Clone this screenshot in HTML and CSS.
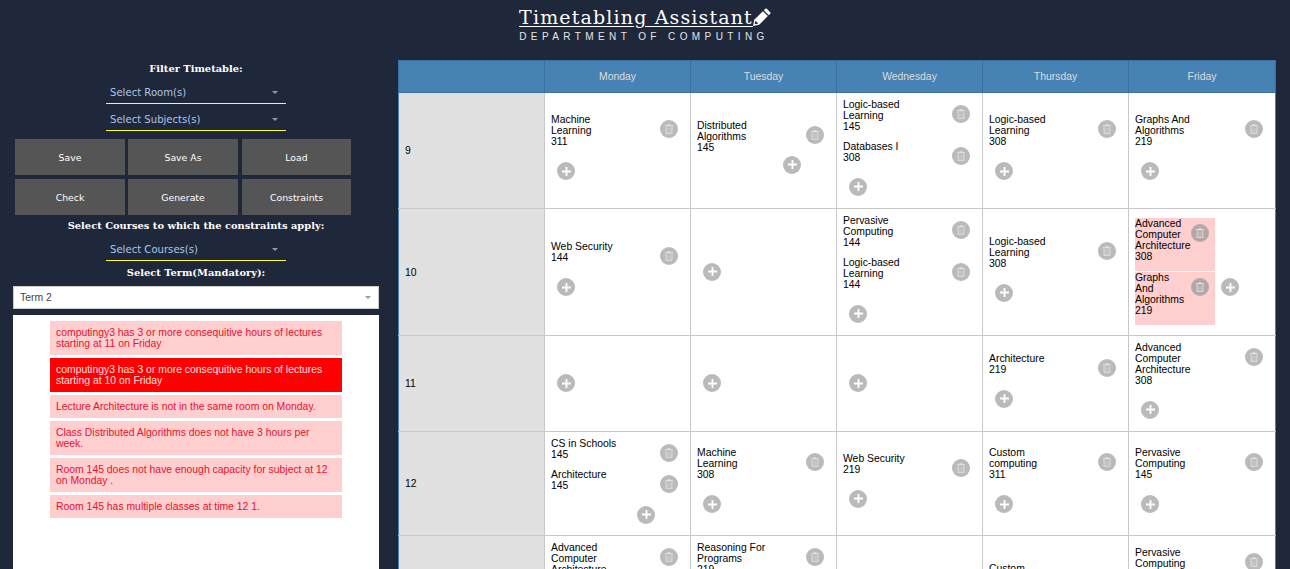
FILE: index.html
```html
<!DOCTYPE html>
<html lang="en">
<head>
<meta charset="utf-8">
<title>Timetabling Assistant</title>
<link rel="stylesheet" href="styles.css">
</head>
<body>
<svg class="sprite" width="0" height="0" aria-hidden="true">
  <symbol id="trash" viewBox="0 0 12 14"><path fill="currentColor" fill-rule="evenodd" d="M4 0h4v1.500h4v1.300H0V1.500h4zM1 3.500h10V14H1zM2.300 3.500v9.200h7.400V3.500z"/><path fill="currentColor" opacity=".55" d="M4 5h1.200v6.500H4zM6.800 5H8v6.500H6.800z"/></symbol>
  <symbol id="plus" viewBox="0 0 10 10"><path fill="currentColor" d="M4 0h2v4h4v2H6v4H4V6H0V4h4z"/></symbol>
</svg>
<header class="masthead">
  <h1 class="title"><span class="title-text">Timetabling Assistant</span><svg class="pencil" viewBox="0 0 16 16" aria-hidden="true"><path fill="currentColor" d="M12.300.7l3 3a1 1 0 0 1 0 1.400L14 6.400 9.600 2 10.900.7a1 1 0 0 1 1.400 0zM8.800 2.800l4.400 4.400-7.700 7.700L0 16l1.100-5.500zM2.200 11.300l-.7 3.200 3.200-.7z"/></svg></h1>
  <p class="subtitle">DEPARTMENT OF COMPUTING</p>
</header>
<main class="layout">
  <aside class="sidebar">
    <div class="label label-filter">Filter Timetable:</div>
    <div class="select select-room"><span>Select Room(s)</span><i class="caret"></i></div>
    <div class="select select-subject"><span>Select Subjects(s)</span><i class="caret"></i></div>
    <div class="buttons">
      <button class="btn">Save</button><button class="btn">Save As</button><button class="btn btn-narrow">Load</button>
      <button class="btn">Check</button><button class="btn">Generate</button><button class="btn btn-narrow">Constraints</button>
    </div>
    <div class="label label-courses">Select Courses to which the constraints apply:</div>
    <div class="select select-courses"><span>Select Courses(s)</span><i class="caret"></i></div>
    <div class="label label-term">Select Term(Mandatory):</div>
    <div class="term"><span>Term 2</span><i class="caret"></i></div>
    <div class="messages">
      <div class="msg">computingy3 has 3 or more consequitive hours of lectures starting at 11 on Friday</div>
      <div class="msg msg-active">computingy3 has 3 or more consequitive hours of lectures starting at 10 on Friday</div>
      <div class="msg">Lecture Architecture is not in the same room on Monday.</div>
      <div class="msg">Class Distributed Algorithms does not have 3 hours per week.</div>
      <div class="msg">Room 145 does not have enough capacity for subject at 12 on Monday .</div>
      <div class="msg">Room 145 has multiple classes at time 12 1.</div>
    </div>
  </aside>
  <table class="timetable">
    <thead>
      <tr><th></th><th>Monday</th><th>Tuesday</th><th>Wednesday</th><th>Thursday</th><th>Friday</th></tr>
    </thead>
    <tbody>
      <tr class="r9">
        <td class="hour">9</td>
        <td><div class="entry"><span>Machine<br>Learning<br>311</span><button class="del"><svg><use href="#trash"/></svg></button></div><button class="add"><svg><use href="#plus"/></svg></button></td>
        <td><div class="entry"><span>Distributed<br>Algorithms<br>145</span><button class="del"><svg><use href="#trash"/></svg></button></div><button class="add add-tight"><svg><use href="#plus"/></svg></button></td>
        <td><div class="entry"><span>Logic-based<br>Learning<br>145</span><button class="del"><svg><use href="#trash"/></svg></button></div><div class="entry"><span>Databases I<br>308</span><button class="del"><svg><use href="#trash"/></svg></button></div><button class="add"><svg><use href="#plus"/></svg></button></td>
        <td><div class="entry"><span>Logic-based<br>Learning<br>308</span><button class="del"><svg><use href="#trash"/></svg></button></div><button class="add"><svg><use href="#plus"/></svg></button></td>
        <td><div class="entry"><span>Graphs And<br>Algorithms<br>219</span><button class="del"><svg><use href="#trash"/></svg></button></div><button class="add"><svg><use href="#plus"/></svg></button></td>
      </tr>
      <tr class="r10">
        <td class="hour">10</td>
        <td><div class="entry"><span>Web Security<br>144</span><button class="del"><svg><use href="#trash"/></svg></button></div><button class="add"><svg><use href="#plus"/></svg></button></td>
        <td><button class="add"><svg><use href="#plus"/></svg></button></td>
        <td><div class="entry"><span>Pervasive<br>Computing<br>144</span><button class="del"><svg><use href="#trash"/></svg></button></div><div class="entry"><span>Logic-based<br>Learning<br>144</span><button class="del"><svg><use href="#trash"/></svg></button></div><button class="add"><svg><use href="#plus"/></svg></button></td>
        <td><div class="entry"><span>Logic-based<br>Learning<br>308</span><button class="del"><svg><use href="#trash"/></svg></button></div><button class="add"><svg><use href="#plus"/></svg></button></td>
        <td>
          <div class="conflicts">
            <div class="conflict-stack">
              <div class="entry entry-conflict"><span>Advanced<br>Computer<br>Architecture<br>308</span><button class="del"><svg><use href="#trash"/></svg></button></div>
              <div class="entry entry-conflict"><span>Graphs<br>And<br>Algorithms<br>219</span><button class="del"><svg><use href="#trash"/></svg></button></div>
            </div>
            <button class="add add-beside"><svg><use href="#plus"/></svg></button>
          </div>
        </td>
      </tr>
      <tr class="r11">
        <td class="hour">11</td>
        <td><button class="add"><svg><use href="#plus"/></svg></button></td>
        <td><button class="add"><svg><use href="#plus"/></svg></button></td>
        <td><button class="add"><svg><use href="#plus"/></svg></button></td>
        <td><div class="entry"><span>Architecture<br>219</span><button class="del"><svg><use href="#trash"/></svg></button></div><button class="add"><svg><use href="#plus"/></svg></button></td>
        <td><div class="entry"><span>Advanced<br>Computer<br>Architecture<br>308</span><button class="del"><svg><use href="#trash"/></svg></button></div><button class="add"><svg><use href="#plus"/></svg></button></td>
      </tr>
      <tr class="r12">
        <td class="hour">12</td>
        <td><div class="entry"><span>CS in Schools<br>145</span><button class="del"><svg><use href="#trash"/></svg></button></div><div class="entry"><span>Architecture<br>145</span><button class="del"><svg><use href="#trash"/></svg></button></div><button class="add add-right"><svg><use href="#plus"/></svg></button></td>
        <td><div class="entry"><span>Machine<br>Learning<br>308</span><button class="del"><svg><use href="#trash"/></svg></button></div><button class="add"><svg><use href="#plus"/></svg></button></td>
        <td><div class="entry"><span>Web Security<br>219</span><button class="del"><svg><use href="#trash"/></svg></button></div><button class="add"><svg><use href="#plus"/></svg></button></td>
        <td><div class="entry"><span>Custom<br>computing<br>311</span><button class="del"><svg><use href="#trash"/></svg></button></div><button class="add"><svg><use href="#plus"/></svg></button></td>
        <td><div class="entry"><span>Pervasive<br>Computing<br>145</span><button class="del"><svg><use href="#trash"/></svg></button></div><button class="add"><svg><use href="#plus"/></svg></button></td>
      </tr>
      <tr class="r13">
        <td class="hour">13</td>
        <td><div class="entry"><span>Advanced<br>Computer<br>Architecture<br>308</span><button class="del"><svg><use href="#trash"/></svg></button></div></td>
        <td><div class="entry"><span>Reasoning For<br>Programs<br>219</span><button class="del"><svg><use href="#trash"/></svg></button></div></td>
        <td></td>
        <td class="cell-lowest"><div class="entry"><span>Custom<br>computing<br>311</span><button class="del"><svg><use href="#trash"/></svg></button></div></td>
        <td class="cell-low"><div class="entry"><span>Pervasive<br>Computing<br>145</span><button class="del"><svg><use href="#trash"/></svg></button></div></td>
      </tr>
    </tbody>
  </table>
</main>
</body>
</html>
```
FILE: styles.css
```css
* { box-sizing: border-box; }
html, body { margin: 0; height: 569px; overflow: hidden; }
body { background: #1f273b; font-family: "Liberation Sans", Arial, sans-serif; color: #000; }
.sprite { position: absolute; }
button { font: inherit; padding: 0; border: 0; cursor: pointer; }

.masthead { height: 60px; padding-top: 6px; text-align: center; color: #fff; }
.title { margin: 0; display: flex; justify-content: center; align-items: flex-start; font: 400 19px/22px "DejaVu Serif", serif; letter-spacing: 1.150px; }
.title-text { text-decoration: underline; text-underline-offset: 2px; }
.pencil { width: 18px; height: 18px; margin: 2px 0 0 0; }
.subtitle { margin: 3px 0 0; padding-right: 2px; font-size: 10px; line-height: 12px; letter-spacing: 4.400px; color: #e6e6e6; }

.layout { display: flex; align-items: flex-start; padding-left: 13px; }
.sidebar { width: 366px; margin-right: 19px; flex: none; }
.label { text-align: center; color: #fff; font: 700 9.900px/12px "DejaVu Serif", serif; }
.label-filter { margin-top: 3px; }
.select { width: 180px; margin: 0 auto; padding: 0 4px 2px; display: flex; align-items: flex-end; justify-content: space-between; border-bottom: 1px solid #ffff33; color: #a9c7e8; font: 10.100px/16px "DejaVu Sans", sans-serif; }
.select-room { height: 29px; }
.select-subject { height: 27px; }
.select-courses { height: 29px; }
.select .caret { margin: 0 4px 7px 0; }
.caret { width: 0; height: 0; border-style: solid; border-color: #999 transparent transparent; border-width: 3px 3px 0; }
.buttons { margin: 8px 0 0 2px; display: grid; grid-template-columns: 113px 114px 109px; row-gap: 4px; }
.btn { width: 110px; height: 36px; padding-top: 1px; background: #555; color: #fff; font: 9.300px/12px "DejaVu Sans", sans-serif; }
.btn-narrow { width: 109px; }
.label-courses { margin-top: 5px; }
.label-term { margin-top: 6px; }
.term { height: 23px; margin-top: 7px; padding: 0 7px 0 6px; display: flex; align-items: center; justify-content: space-between; background: #fff; border: 1px solid #ccc; color: #444; font-size: 10.400px; }
.messages { height: 300px; margin-top: 6px; padding: 6px 37px 0; background: #fff; }
.msg { margin-bottom: 3px; padding: 6px; background: #ffcfcf; color: #e8112d; font-size: 10.400px; line-height: 11px; }
.msg-active { background: #f00; color: #ffe0e0; }

.timetable { flex: none; width: 878px; table-layout: fixed; border-collapse: collapse; }
.timetable th { width: 146px; height: 32px; background: #4682b4; border: 1px solid #39709f; color: #ddd; font-weight: 400; font-size: 10.400px; }
.timetable th:last-child { width: auto; }
.timetable td { padding: 0 12px 0 6px; background: #fff; border: 1px solid #c8c8c8; font-size: 10.400px; line-height: 11px; vertical-align: middle; }
.timetable td.hour { background: #e1e1e1; border-left-color: #4682b4; }
.timetable td:last-child { border-right-color: #4682b4; }
.r9 { height: 116px; }
.r10 { height: 127px; }
.r11 { height: 96px; }
.r12 { height: 104px; }
.r13 { height: 100px; }
.r13 td { vertical-align: top; padding-top: 6px; }
.r13 td.hour { vertical-align: middle; padding-top: 0; }
.r13 td.cell-low { padding-top: 11px; }
.r13 td.cell-lowest { padding-top: 27px; }
.entry { display: flex; align-items: flex-start; justify-content: space-between; padding-bottom: 9px; }
.entry span { display: block; }
.del, .add { flex: none; width: 18px; height: 18px; border-radius: 50%; background: #bababa; color: #e4e4e4; display: flex; align-items: center; justify-content: center; }
.del { margin: 6px 0 -8px; }
.del svg { width: 8px; height: 10px; }
.add { margin: 6px 0 7px 6px; color: #fff; }
.add svg { width: 9px; height: 9px; }
.add-right { margin: 6px 0 6px 86px; }
.add-tight { margin: -6px 0 8px 86px; }
.conflicts { display: flex; align-items: center; }
.conflict-stack { flex: none; width: 80px; }
.entry-conflict { height: 53px; padding: 0; margin-bottom: 1px; background: #ffcfcf; }
.entry-conflict .del { margin: 6px 6px 0 0; background: #b3a8a8; }
.add-beside { margin: 30px 0 0 6px; }
```
